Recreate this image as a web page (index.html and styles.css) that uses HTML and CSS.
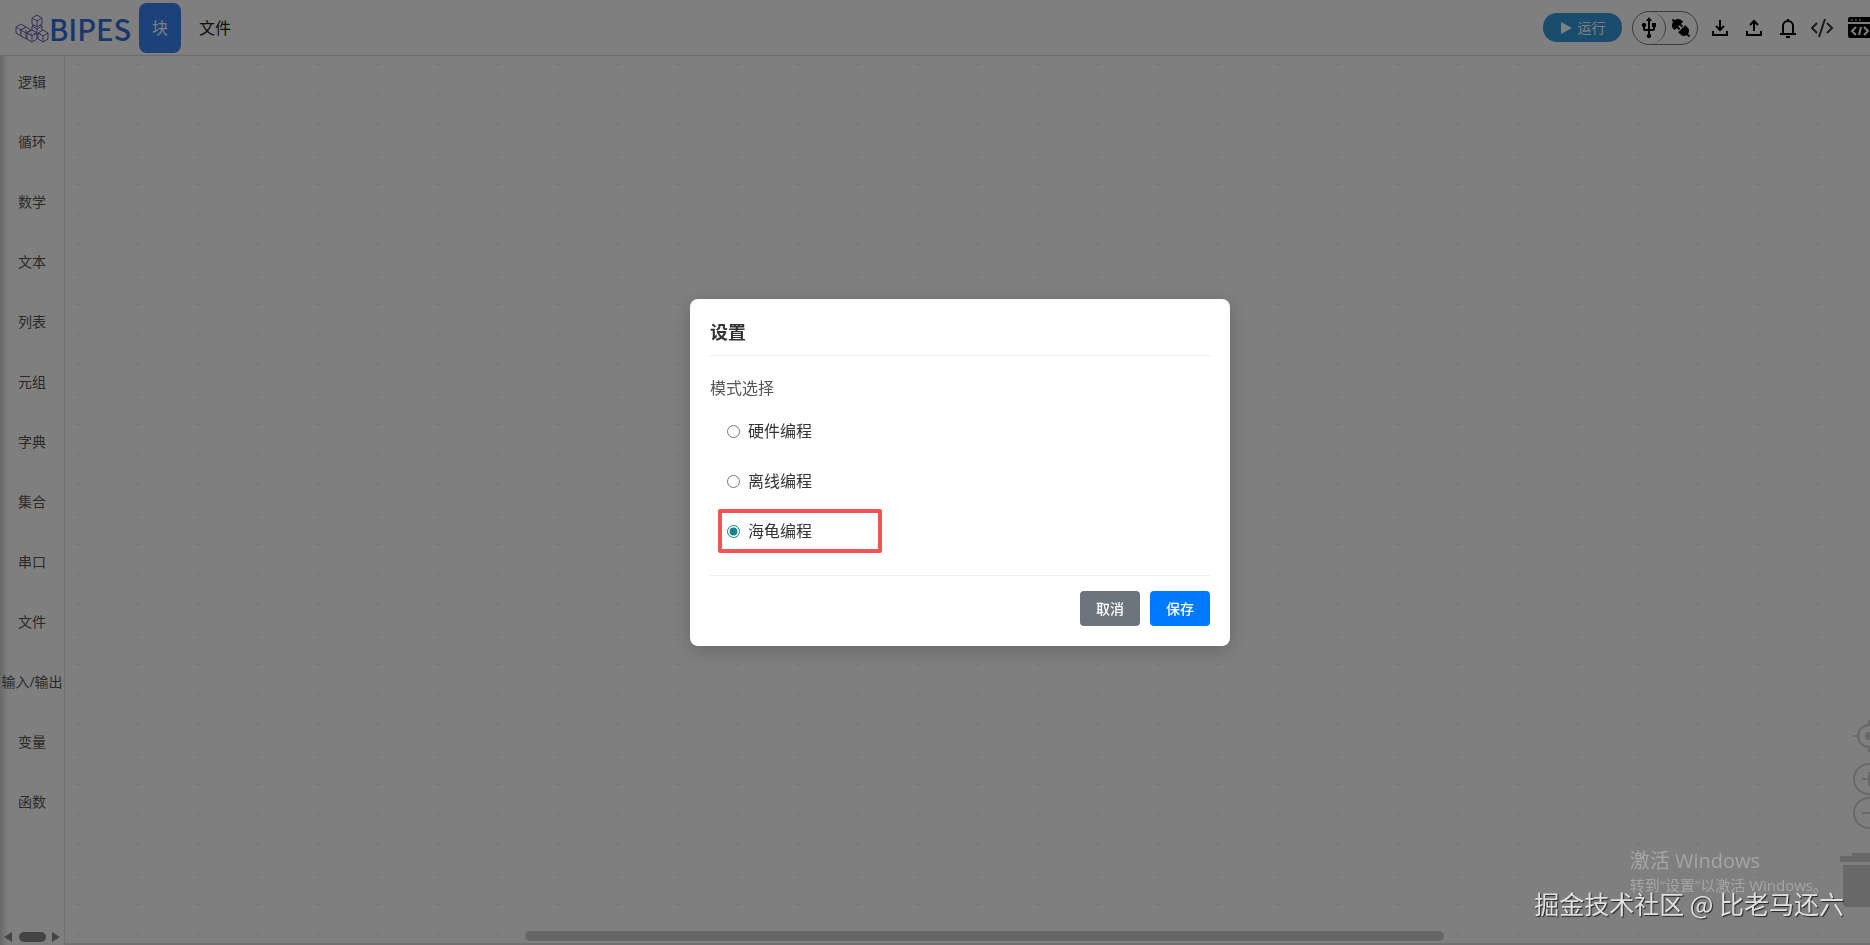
FILE: index.html
```html
<!DOCTYPE html>
<html lang="zh-CN">
<head>
    <meta charset="UTF-8">
    <meta name="viewport" content="width=device-width, initial-scale=1.0">
    <title>BIPES</title>
    <link rel="stylesheet" href="styles.css">
</head>
<body>
    <header class="topbar">
        <a class="logo" href="#">
            <svg class="logo-mark" viewBox="0 0 34 30" fill="#fff" stroke="#6662b4" stroke-width="1" stroke-linejoin="round">
                <defs>
                    <path id="cube" d="M0-6l5 3v6l-5 3-5-3v-6zM-5-3l5 3 5-3M0 0v6"/>
                </defs>
                <use href="#cube" x="22" y="16"/>
                <use href="#cube" x="22" y="8"/>
                <use href="#cube" x="6" y="17"/>
                <use href="#cube" x="11" y="20"/>
                <use href="#cube" x="17" y="23"/>
                <use href="#cube" x="28" y="23"/>
            </svg>
            <span class="logo-text">BIPES</span>
        </a>
        <nav class="tabs">
            <button class="tab active" type="button">块</button>
            <button class="tab" type="button">文件</button>
        </nav>
        <div class="tools">
            <button class="run" type="button">
                <svg width="12" height="12" viewBox="0 0 12 12" fill="#fff"><path d="M1 0l11 6-11 6z"/></svg>
                运行
            </button>
            <div class="connect">
                <button class="connect-usb" type="button" aria-label="USB">
                    <svg width="24" height="24" viewBox="0 0 24 24"><path d="M15 7v4h1v2h-3V5h2l-3-4-3 4h2v8H8v-2.07c.7-.37 1.2-1.08 1.2-1.93 0-1.21-.99-2.2-2.2-2.2S4.8 7.79 4.8 9c0 .85.5 1.56 1.2 1.93V13c0 1.11.89 2 2 2h3v3.05c-.71.37-1.2 1.1-1.2 1.95 0 1.22.99 2.2 2.2 2.2s2.2-.98 2.2-2.2c0-.85-.49-1.58-1.2-1.95V15h3c1.11 0 2-.89 2-2v-2h1V7z"/></svg>
                </button>
                <button class="connect-plug" type="button" aria-label="连接">
                    <svg width="22" height="22" viewBox="0 0 22 22">
                        <g transform="rotate(45 11 11)">
                            <path d="M-1 10h2a6 6 0 0 1 6-5h1v12H7a6 6 0 0 1-6-5h-2z"/>
                            <path d="M8 8h3v2H8zM8 12h3v2H8z"/>
                            <path d="M12 6h3a5 5 0 0 1 5 4h3v2h-3a5 5 0 0 1-5 4h-3z"/>
                        </g>
                    </svg>
                </button>
            </div>
            <button class="icon" type="button" aria-label="下载">
                <svg width="20" height="20" viewBox="0 0 20 20" fill="none" stroke="#000" stroke-width="2"><path d="M10 2v10M6 8l4 4 4-4M3 13v4h14v-4"/></svg>
            </button>
            <button class="icon" type="button" aria-label="上传">
                <svg width="20" height="20" viewBox="0 0 20 20" fill="none" stroke="#000" stroke-width="2"><path d="M10 13V3M6 7l4-4 4 4M3 13v4h14v-4"/></svg>
            </button>
            <button class="icon" type="button" aria-label="通知">
                <svg width="20" height="20" viewBox="0 0 20 20" fill="none" stroke="#000" stroke-width="2"><path d="M10 1v2M2 16h16M5 16V8a5 5 0 0 1 10 0v8M8 19h4"/></svg>
            </button>
            <button class="icon" type="button" aria-label="代码">
                <svg width="24" height="20" viewBox="0 0 24 20" fill="none" stroke="#333" stroke-width="2"><path d="M7 5l-5 5 5 5M17 5l5 5-5 5M15 1L9 19"/></svg>
            </button>
            <button class="icon icon-console" type="button" aria-label="控制台">
                <svg width="24" height="22" viewBox="0 0 24 22">
                    <path d="M2 0h20a2 2 0 0 1 2 2v3H0V2a2 2 0 0 1 2-2zM0 7h24v12a2 2 0 0 1-2 2H2a2 2 0 0 1-2-2z"/>
                    <path d="M3 3h2M7 3h2M11 3h2" stroke="#fff" stroke-width="1"/>
                    <path d="M8 10l-4 4 4 4M16 10l4 4-4 4M13 10l-2 8" fill="none" stroke="#fff" stroke-width="2"/>
                </svg>
            </button>
        </div>
    </header>

    <main class="editor">
        <aside class="toolbox">
            <ul class="categories">
                <li>逻辑</li>
                <li>循环</li>
                <li>数学</li>
                <li>文本</li>
                <li>列表</li>
                <li>元组</li>
                <li>字典</li>
                <li>集合</li>
                <li>串口</li>
                <li>文件</li>
                <li>输入/输出</li>
                <li>变量</li>
                <li>函数</li>
            </ul>
            <div class="toolbox-scroll">
                <svg width="8" height="10" viewBox="0 0 8 10"><path d="M8 0v10L0 5z"/></svg>
                <span class="toolbox-thumb"></span>
                <svg width="8" height="10" viewBox="0 0 8 10"><path d="M0 0v10l8-5z"/></svg>
            </div>
        </aside>
        <section class="workspace">
            <div class="scrollbar"></div>
            <svg class="zoom-controls" width="32" height="200" viewBox="0 0 32 200" fill="none" stroke="#d0d0d0" stroke-width="2">
                <circle cx="16" cy="16" r="11"/>
                <circle cx="16" cy="16" r="4" fill="#d0d0d0" stroke="none"/>
                <path d="M16 0v5M16 27v5M0 16h5"/>
                <circle cx="16" cy="59" r="15"/>
                <path d="M16 52v14M9 59h14"/>
                <circle cx="16" cy="93" r="15"/>
                <path d="M9 93h14"/>
            </svg>
            <svg class="trash" width="30" height="55" viewBox="0 0 30 55" fill="#d0d0d0">
                <path d="M0 3h12V0h18v9H0zM3 12h27v42H7q-4 0-4-4z"/>
            </svg>
        </section>
    </main>

    <div class="overlay">
        <form class="modal">
            <h3 class="modal-title">设置</h3>
            <fieldset class="modes">
                <legend>模式选择</legend>
                <label class="mode"><input type="radio" name="mode" value="hardware">硬件编程</label>
                <label class="mode"><input type="radio" name="mode" value="offline">离线编程</label>
                <label class="mode marked"><input type="radio" name="mode" value="turtle" checked>海龟编程</label>
            </fieldset>
            <div class="modal-footer">
                <button class="btn cancel" type="button">取消</button>
                <button class="btn save" type="button">保存</button>
            </div>
        </form>
    </div>

    <div class="activate">
        <p class="activate-title">激活 Windows</p>
        <p class="activate-hint">转到“设置”以激活 Windows。</p>
    </div>
    <p class="watermark">掘金技术社区 @ 比老马还六</p>
</body>
</html>
```

FILE: styles.css
```css
* {
    box-sizing: border-box;
}

html, body {
    height: 100%;
    margin: 0;
}

body {
    display: flex;
    flex-direction: column;
    overflow: hidden;
    background-color: white;
    color: #333;
    font-family: "Open Sans", "Noto Sans CJK SC", sans-serif;
    font-size: 16px;
    line-height: 24px;
}

button {
    border: none;
    padding: 0;
    background: none;
    color: inherit;
    font: inherit;
    cursor: pointer;
}

svg {
    display: block;
    flex: none;
}

.topbar {
    display: flex;
    align-items: center;
    flex: none;
    height: 56px;
    padding-left: 15px;
    border-bottom: 1px solid #d8d8d8;
    overflow: hidden;
}

.logo {
    display: flex;
    align-items: center;
    width: 124px;
    text-decoration: none;
}

.logo-mark {
    width: 34px;
    height: 30px;
}

.logo-text {
    color: #2f6fdc;
    font-family: "Noto Sans CJK SC", sans-serif;
    font-size: 29px;
    font-weight: 500;
    line-height: 40px;
}

.tabs {
    display: flex;
}

.tab {
    height: 50px;
    padding: 0 18px;
    color: #222;
}

.tab.active {
    width: 42px;
    padding: 0;
    border-radius: 8px;
    background-color: #3b82f6;
    color: white;
}

.tools {
    display: flex;
    align-items: center;
    gap: 10px;
    margin-left: auto;
    margin-right: -2px;
}

.run {
    display: flex;
    align-items: center;
    justify-content: center;
    gap: 6px;
    width: 79px;
    height: 29px;
    border-radius: 14px;
    background-color: #3498db;
    color: white;
    font-size: 14px;
}

.connect {
    display: flex;
    width: 66px;
    height: 34px;
    border: 1px solid #777;
    border-radius: 17px;
}

.connect button {
    display: flex;
    align-items: center;
    justify-content: center;
    flex: 1;
}

.connect .connect-usb {
    border-right: 1px solid #777;
    border-radius: 16px;
}

.icon {
    display: flex;
    align-items: center;
    justify-content: center;
    width: 24px;
    height: 24px;
}

.icon-console {
    margin-left: 4px;
}

.editor {
    display: flex;
    flex: 1;
    min-height: 0;
}

.toolbox {
    display: flex;
    flex-direction: column;
    justify-content: space-between;
    width: 65px;
    border-right: 1px solid #e0e0e0;
    background: linear-gradient(to right, #d0d0d0, white 8px);
}

.categories {
    margin: 0;
    padding: 0;
    list-style: none;
    color: #555;
    font-size: 14px;
    line-height: 20px;
    text-align: center;
    white-space: nowrap;
}

.categories li {
    height: 60px;
    padding-top: 16px;
}

.toolbox-scroll {
    display: flex;
    justify-content: space-between;
    padding: 3px 4px;
    fill: #888;
}

.toolbox-thumb {
    width: 27px;
    height: 10px;
    border-radius: 5px;
    background-color: #888;
}

/* faint grid of the block canvas */
.workspace {
    position: relative;
    flex: 1;
    border-bottom: 2px solid #e4e4e4;
    background-image:
        conic-gradient(from 90deg at 56px 29px, #eaeaea 90deg, transparent 0),
        conic-gradient(from 90deg at 58px 59px, #eaeaea 90deg, transparent 0);
    background-size: 60px 30px, 60px 60px;
    background-position: 15px 9px, 44px 39px;
}

.scrollbar {
    position: absolute;
    left: 25.5%;
    right: 23.6%;
    bottom: 2px;
    height: 10px;
    border-radius: 5px;
    background-color: #ccc;
}

.zoom-controls {
    position: absolute;
    right: -15px;
    bottom: 23px;
}

.trash {
    position: absolute;
    right: 0;
    bottom: 35px;
}

.overlay {
    position: fixed;
    inset: 0;
    display: flex;
    align-items: center;
    justify-content: center;
    padding-left: 50px;
    background-color: rgba(0, 0, 0, 0.5);
}

.modal {
    width: 540px;
    padding: 20px;
    border-radius: 8px;
    background-color: white;
    box-shadow: 0 4px 20px rgba(0, 0, 0, 0.2);
}

.modal-title {
    margin: 0;
    padding-bottom: 10px;
    border-bottom: 1px solid #eee;
    font-size: 18px;
    line-height: 26px;
}

.modes {
    margin: 0;
    padding: 0;
    border: none;
    min-width: 0;
}

.modes legend {
    padding: 20px 0 9px;
    color: #555;
}

.mode {
    display: flex;
    align-items: center;
    width: 164px;
    height: 44px;
    margin: 0 0 6px 8px;
    padding: 0 5px;
    border: 4px solid transparent;
}

.mode input {
    width: 13px;
    height: 13px;
    margin: 0 8px 0 0;
    accent-color: #18808c;
}

.mode.marked {
    margin-bottom: 22px;
    border-color: #f05454;
    border-radius: 2px;
}

.modal-footer {
    display: flex;
    justify-content: flex-end;
    gap: 10px;
    padding-top: 15px;
    border-top: 1px solid #eee;
}

.btn {
    width: 60px;
    height: 35px;
    border-radius: 4px;
    color: white;
    font-size: 14px;
    font-weight: 500;
}

.cancel {
    background-color: #6c757d;
}

.save {
    background-color: #007bff;
}

/* system notice and page watermark, both over the dimmed page */
.activate {
    position: fixed;
    right: 42px;
    bottom: 50px;
    color: #a6a6a6;
}

.activate p {
    margin: 0;
}

.activate-title {
    font-size: 20px;
    line-height: 28px;
}

.activate-hint {
    font-size: 15px;
    line-height: 20px;
}

.watermark {
    position: fixed;
    right: 26px;
    bottom: 26px;
    margin: 0;
    color: #e0e0e0;
    font-family: "Noto Sans CJK SC", sans-serif;
    font-size: 25px;
    line-height: 32px;
    text-shadow: 1px 1px 1px #222;
}
```
